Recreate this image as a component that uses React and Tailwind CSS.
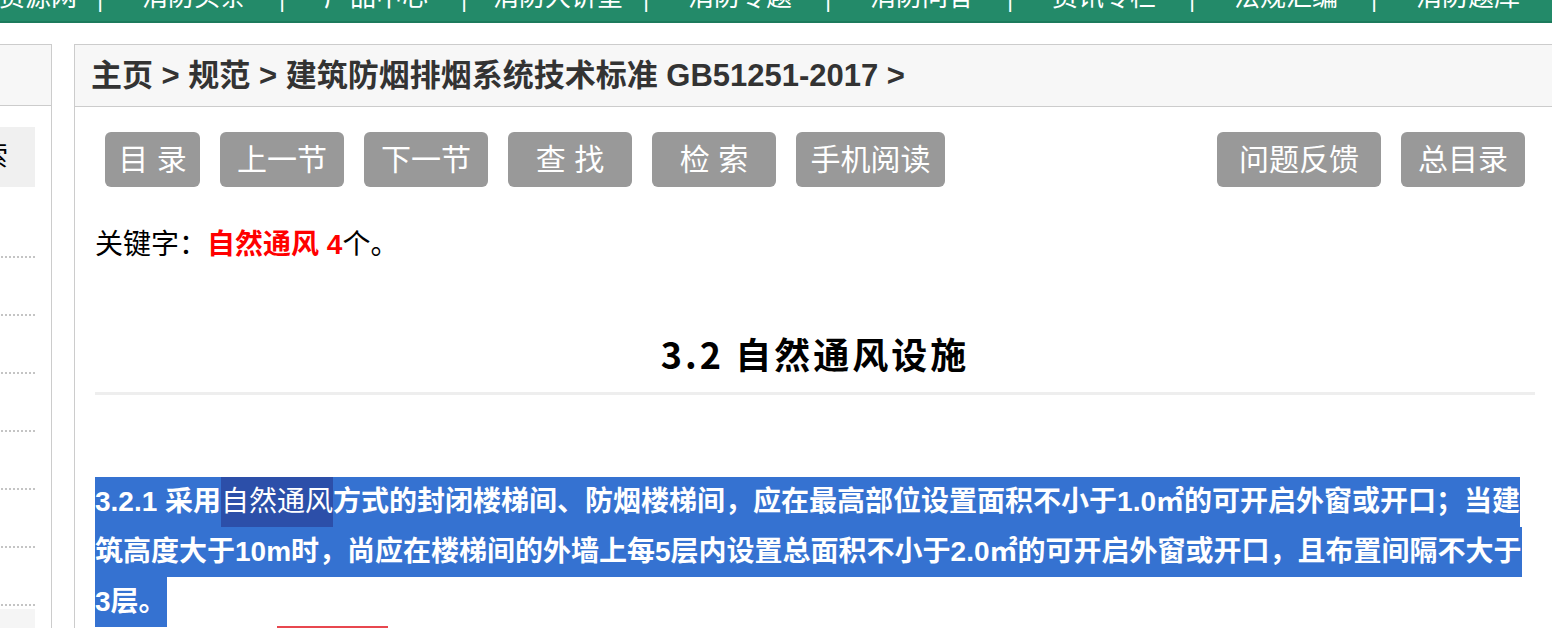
import React from "react";

const cjk = { fontFamily: '"Liberation Sans", "Noto Sans CJK SC", sans-serif' };

const navItems = ["消防资源网", "消防头条", "产品中心", "消防大讲堂", "消防专题", "消防问答", "资讯专栏", "法规汇编", "消防题库"];

function NavBar() {
  return (
    <div className="h-[23px] bg-[#238a69] border-b-2 border-[#1c7b5c] overflow-hidden flex -ml-[79px]">
      {navItems.map((t, i) => (
        <div key={t} className="w-[182px] shrink-0 flex items-start relative">
          <span className="flex-1 text-center text-white text-[26px] leading-[26px] -mt-[16px]">{t}</span>
          {i < navItems.length - 1 && (
            <span className="absolute right-0 top-0 text-white text-[22px] leading-[22px] -mt-[11px]">|</span>
          )}
        </div>
      ))}
    </div>
  );
}

function Sidebar() {
  return (
    <div className="w-[241px] -ml-[189px] shrink-0 border border-[#ccc] h-[600px]">
      <div className="h-[61px] bg-[#f7f7f7] border-b border-[#ccc]" />
      <div className="pr-[16px] pl-[16px]">
        <div className="mt-[21px] h-[60px] bg-[#f0f0f0] flex items-center justify-end pr-[27px] text-[28px] text-black">
          规范检索
        </div>
        <div className="mt-[13px]">
          {[0, 1, 2, 3, 4, 5, 6].map((i) => (
            <div key={i} className="h-[58px] border-b-2 border-dotted border-[#c4c4c4]" />
          ))}
          <div className="mt-[3px] h-[40px] bg-[#f5f5f5]" />
        </div>
      </div>
    </div>
  );
}

function Btn({ w, children }) {
  return (
    <button className={`${w} h-[55px] rounded-[6px] bg-[#999999] text-white text-[30px] leading-none font-normal flex items-center justify-center`}>
      {children}
    </button>
  );
}

export default function App() {
  return (
    <div className="w-full h-[628px] overflow-hidden bg-white" style={cjk}>
      <NavBar />
      <div className="flex gap-[22px] mt-[21px]">
        <Sidebar />
        <div className="w-[1482px] shrink-0 border border-[#ccc] h-[640px]">
          <div className="h-[62px] bg-[#f7f7f7] border-b border-[#ccc] flex items-center pl-[16px] pt-[2px] text-[31px] font-bold text-[#333]">
            主页 &gt; 规范 &gt; 建筑防烟排烟系统技术标准 GB51251-2017 &gt;
          </div>
          <div className="px-[20px]">
            <div className="mt-[25px] flex items-center justify-between px-[10px]">
              <div className="flex gap-[20px]">
                <Btn w="w-[95px]">目&nbsp;录</Btn>
                <Btn w="w-[124px]">上一节</Btn>
                <Btn w="w-[124px]">下一节</Btn>
                <Btn w="w-[124px]">查&nbsp;找</Btn>
                <Btn w="w-[124px]">检&nbsp;索</Btn>
                <Btn w="w-[149px]">手机阅读</Btn>
              </div>
              <div className="flex gap-[20px]">
                <Btn w="w-[164px]">问题反馈</Btn>
                <Btn w="w-[124px]">总目录</Btn>
              </div>
            </div>
            <div className="mt-[38px] text-[28px] leading-[40px] text-black">
              关键字：<span className="text-[#ff0000] font-bold">自然通风 4</span>个。
            </div>
            <div className="mt-[63px] text-center text-[36px] leading-[50px] font-bold text-black tracking-[3px]" style={{ fontFamily: '"Noto Sans CJK SC", sans-serif' }}>
              3.2 自然通风设施
            </div>
            <div className="mt-[14px] h-[3px] bg-[#eeeeee]" />
            <div className="mt-[82px] text-[28px] leading-[50px] font-bold text-white">
              <div className="w-fit bg-[#3572d1] whitespace-nowrap">
                3.2.1 采用<span className="inline-block bg-[#2c4fa9] font-normal">自然通风</span>方式的封闭楼梯间、防烟楼梯间，应在最高部位设置面积不小于1.0㎡的可开启外窗或开口；当建
              </div>
              <div className="w-fit bg-[#3572d1] whitespace-nowrap">
                筑高度大于10m时，尚应在楼梯间的外墙上每5层内设置总面积不小于2.0㎡的可开启外窗或开口，且布置间隔不大于
              </div>
              <div className="w-fit bg-[#3572d1] whitespace-nowrap">3层。</div>
            </div>
            <div className="-mt-[1px] ml-[182px] w-[111px] h-[40px] bg-[#e8474f]" />
          </div>
        </div>
      </div>
    </div>
  );
}
